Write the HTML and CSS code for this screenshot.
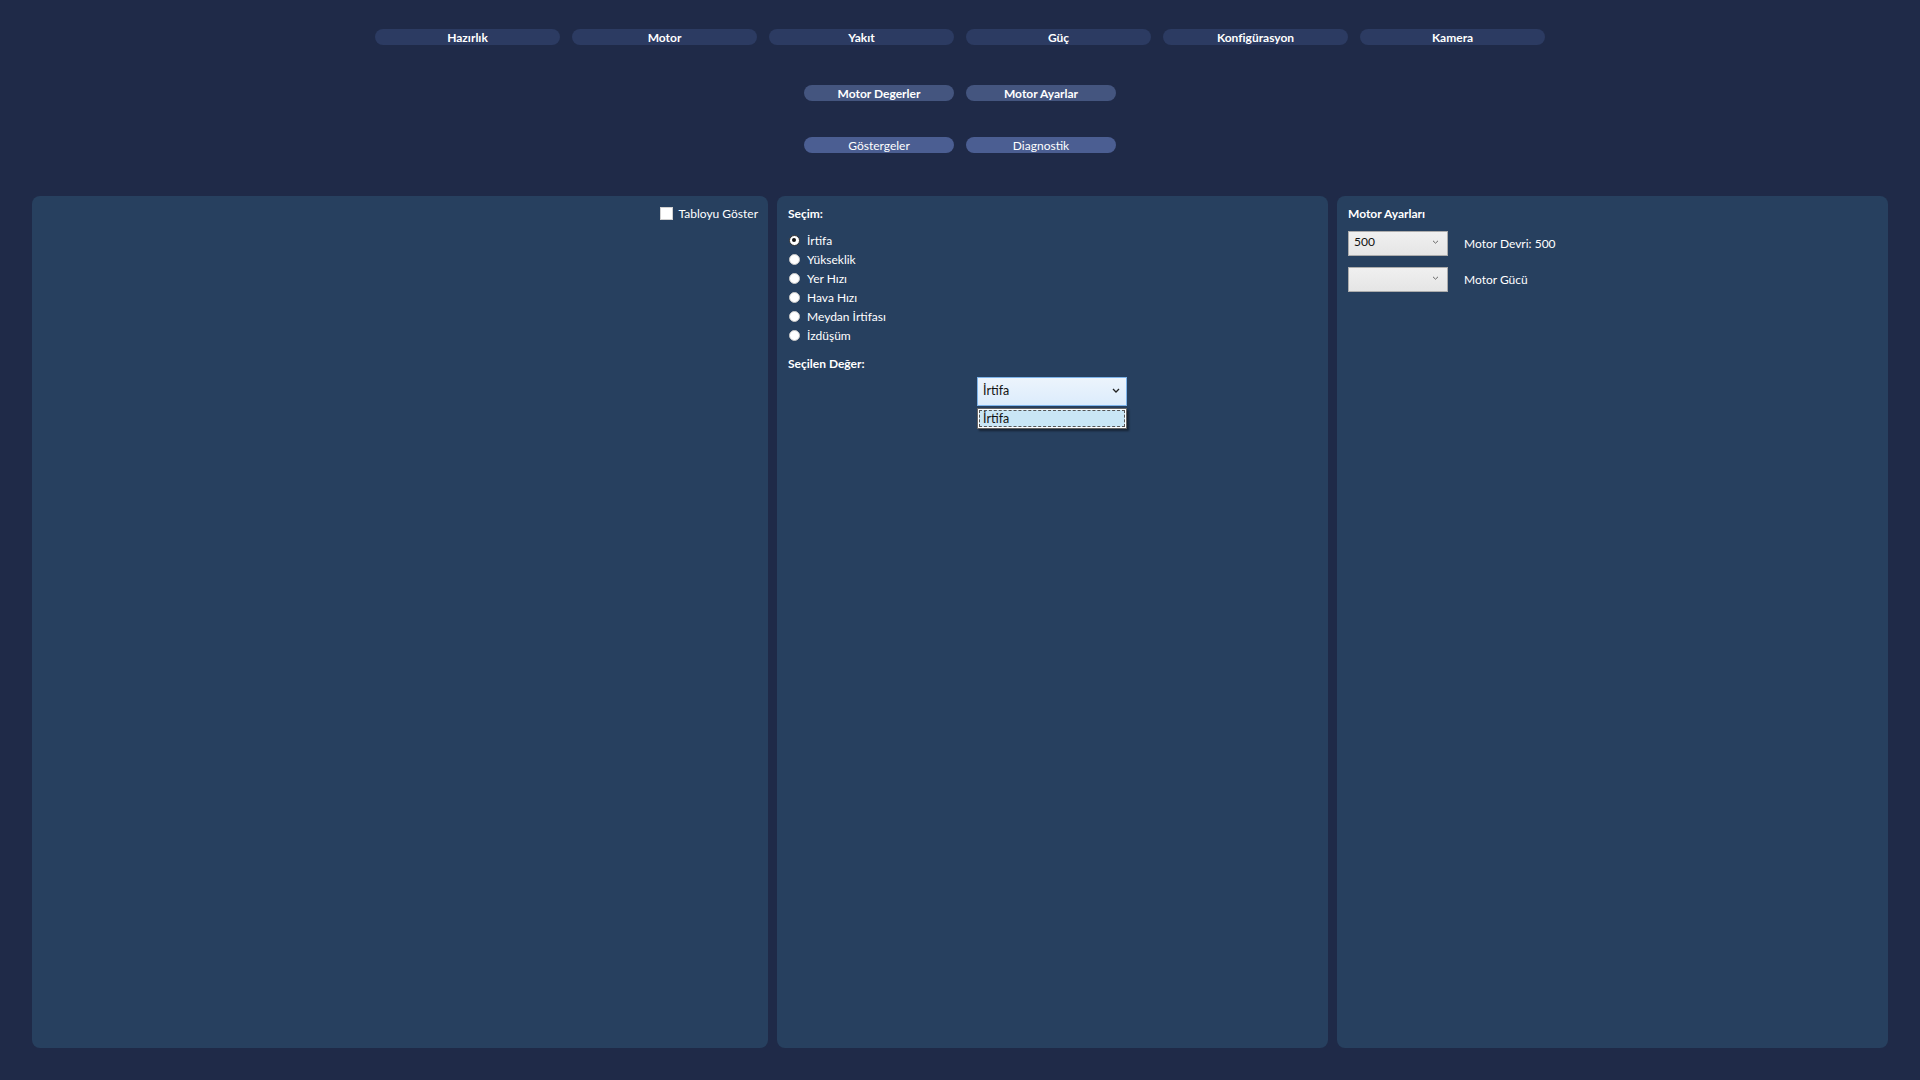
FILE: index.html
```html
<!DOCTYPE html>
<html lang="tr">
<head>
<meta charset="utf-8">
<title>Motor Ayarlar</title>
<link rel="stylesheet" href="styles.css">
</head>
<body>
<div class="app">
  <nav class="tabs tabs-main">
    <button class="pill pill-main">Hazırlık</button>
    <button class="pill pill-main">Motor</button>
    <button class="pill pill-main">Yakıt</button>
    <button class="pill pill-main">Güç</button>
    <button class="pill pill-main">Konfigürasyon</button>
    <button class="pill pill-main">Kamera</button>
  </nav>
  <nav class="tabs tabs-sub">
    <button class="pill pill-sub">Motor Degerler</button>
    <button class="pill pill-sub">Motor Ayarlar</button>
  </nav>
  <nav class="tabs tabs-third">
    <button class="pill pill-third">Göstergeler</button>
    <button class="pill pill-third">Diagnostik</button>
  </nav>

  <main class="panels">
    <section class="panel panel-left">
      <label class="check">
        <span class="check-box"></span>
        <span>Tabloyu Göster</span>
      </label>
    </section>

    <section class="panel panel-mid">
      <div class="heading">Seçim:</div>
      <ul class="radios">
        <li class="radio-row"><span class="radio radio-on"></span><span>İrtifa</span></li>
        <li class="radio-row"><span class="radio"></span><span>Yükseklik</span></li>
        <li class="radio-row"><span class="radio"></span><span>Yer Hızı</span></li>
        <li class="radio-row"><span class="radio"></span><span>Hava Hızı</span></li>
        <li class="radio-row"><span class="radio"></span><span>Meydan İrtifası</span></li>
        <li class="radio-row"><span class="radio"></span><span>İzdüşüm</span></li>
      </ul>
      <div class="heading heading-value">Seçilen Değer:</div>
      <div class="combo-wrap">
        <div class="combo combo-open">
          <span>İrtifa</span>
          <svg class="chev" width="8" height="5" viewBox="0 0 8 5"><path d="M1 1 L4 4 L7 1" fill="none" stroke="#222" stroke-width="1.3"/></svg>
        </div>
        <div class="dropdown">
          <div class="dropdown-item">İrtifa</div>
        </div>
      </div>
    </section>

    <section class="panel panel-right">
      <div class="heading">Motor Ayarları</div>
      <div class="setting-row">
        <div class="combo combo-plain">
          <span>500</span>
          <svg class="chev" width="7" height="4" viewBox="0 0 7 4"><path d="M1 0.8 L3.5 3.2 L6 0.8" fill="none" stroke="#666" stroke-width="1"/></svg>
        </div>
        <span class="setting-label">Motor Devri: 500</span>
      </div>
      <div class="setting-row">
        <div class="combo combo-plain">
          <span></span>
          <svg class="chev" width="7" height="4" viewBox="0 0 7 4"><path d="M1 0.8 L3.5 3.2 L6 0.8" fill="none" stroke="#666" stroke-width="1"/></svg>
        </div>
        <span class="setting-label">Motor Gücü</span>
      </div>
    </section>
  </main>
</div>
</body>
</html>
```
FILE: styles.css
```css
* { box-sizing: border-box; }
html, body { margin: 0; padding: 0; }
body {
  background: #1f2a48;
  color: #ffffff;
  font-family: "Lato", "Open Sans", sans-serif;
  font-size: 12px;
  width: 1920px;
  height: 1080px;
  overflow: hidden;
}
.app { display: flex; flex-direction: column; }

.tabs { display: flex; justify-content: center; }
.tabs-main { gap: 12px; padding-top: 29px; }
.tabs-sub { gap: 12px; padding-top: 40px; }
.tabs-third { gap: 12px; padding-top: 36px; }

.pill {
  border: none;
  border-radius: 8px;
  height: 16px;
  padding: 1px 0 0 0;
  color: #ffffff;
  font-family: "Lato", "Open Sans", sans-serif;
  font-size: 12px;
  line-height: 15px;
  cursor: pointer;
}
.pill-main { width: 185px; background: #2c3b62; font-weight: 700; }
.pill-sub { width: 150px; background: #44557f; font-weight: 700; }
.pill-third { width: 150px; background: #4b5e92; font-weight: 400; }

.panels {
  display: grid;
  grid-template-columns: 736px 551px 551px;
  column-gap: 9px;
  padding: 0 32px;
  margin-top: 43px;
  height: 852px;
}
.panel {
  background: #27405f;
  border-radius: 8px;
  height: 852px;
}

.panel-left { display: flex; justify-content: flex-end; padding: 11px 10px 0 0; }
.check { display: flex; align-items: flex-start; gap: 6px; height: 14px; line-height: 13px; }
.check-box { width: 13px; height: 13px; background: #ffffff; border: 1px solid #d0d0d0; }

.panel-mid { padding: 10px 0 0 11px; position: relative; }
.heading { font-weight: 700; height: 16px; line-height: 16px; }
.radios { list-style: none; margin: 9px 0 0 0; padding: 0; }
.radio-row { display: flex; align-items: center; height: 19px; gap: 7px; }
.radio {
  width: 11px; height: 11px; border-radius: 50%;
  background: #ffffff; border: 1px solid #c8c8c8;
  position: relative;
  flex: none;
  margin-left: 1px;
}
.radio-on { border: 1.5px solid #333; }
.radio-on::after {
  content: ""; position: absolute; left: 2px; top: 2px;
  width: 4px; height: 4px; border-radius: 50%; background: #111;
}
.heading-value { margin-top: 11px; }

.combo-wrap { width: 150px; margin: 5px 0 0 189px; position: relative; }
.combo {
  display: flex; align-items: center; justify-content: space-between;
  color: #111;
}
.combo-open {
  height: 29px;
  border: 1px solid #7eb4ea;
  background: linear-gradient(#ecf4fc, #dcecfc);
  padding: 0 6px 3px 5px;
  font-size: 12.5px;
}
.chev { flex: none; }
.dropdown {
  position: absolute; left: 0; top: 31px; width: 150px; height: 21px;
  background: #ffffff; border: 1px solid #646464;
  box-shadow: 2px 2px 2px rgba(0,0,0,0.45);
  padding: 1px;
}
.dropdown-item {
  height: 17px; line-height: 15px;
  background: #c9e6f5; color: #111;
  border: 1px dashed #555;
  padding-left: 3px;
  font-size: 12.5px;
}

.panel-right { padding: 10px 0 0 11px; }
.setting-row { display: flex; align-items: center; gap: 16px; margin-top: 11px; }
.panel-right .heading + .setting-row { margin-top: 9px; }
.combo-plain {
  width: 100px; height: 25px;
  border: 1px solid #acacac;
  background: linear-gradient(#f0f0f0, #e5e5e5);
  padding: 0 8px 4px 5px;
}
.setting-label { color: #ffffff; }
```
